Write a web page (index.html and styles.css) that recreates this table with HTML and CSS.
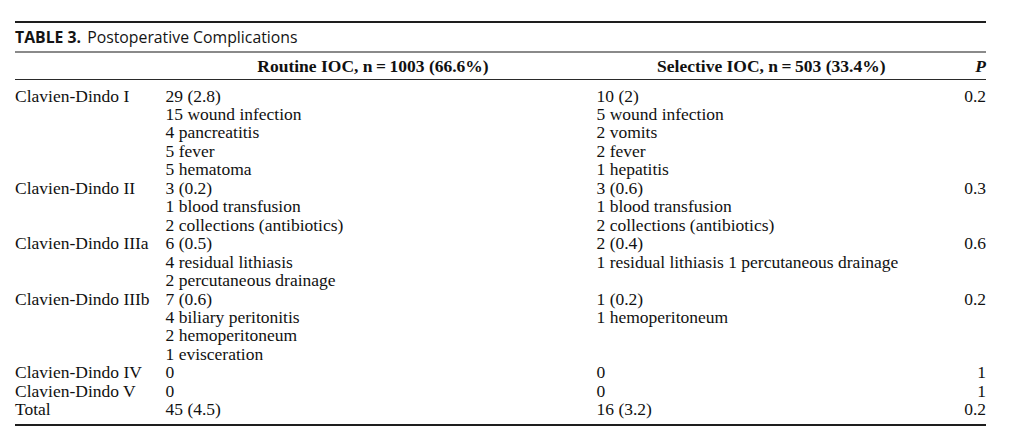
FILE: index.html
```html
<!DOCTYPE html>
<html lang="en">
<head>
<meta charset="utf-8">
<title>Table 3. Postoperative Complications</title>
<link rel="stylesheet" href="styles.css">
</head>
<body>
<div class="wrap">
  <div class="caption"><span class="label">TABLE 3.</span> Postoperative Complications</div>
  <table class="tbl">
    <colgroup>
      <col class="c1"><col class="c2"><col class="c3"><col class="c4">
    </colgroup>
    <thead>
      <tr>
        <th></th>
        <th class="h-routine">Routine IOC, n&thinsp;=&thinsp;1003 (66.6%)</th>
        <th class="h-select">Selective IOC, n&thinsp;=&thinsp;503 (33.4%)</th>
        <th class="h-p"><i>P</i></th>
      </tr>
    </thead>
    <tbody>
      <tr class="first">
        <td>Clavien-Dindo I</td>
        <td><div>29 (2.8)</div><div>15 wound infection</div><div>4 pancreatitis</div><div>5 fever</div><div>5 hematoma</div></td>
        <td><div>10 (2)</div><div>5 wound infection</div><div>2 vomits</div><div>2 fever</div><div>1 hepatitis</div></td>
        <td class="p">0.2</td>
      </tr>
      <tr>
        <td>Clavien-Dindo II</td>
        <td><div>3 (0.2)</div><div>1 blood transfusion</div><div>2 collections (antibiotics)</div></td>
        <td><div>3 (0.6)</div><div>1 blood transfusion</div><div>2 collections (antibiotics)</div></td>
        <td class="p">0.3</td>
      </tr>
      <tr>
        <td>Clavien-Dindo IIIa</td>
        <td><div>6 (0.5)</div><div>4 residual lithiasis</div><div>2 percutaneous drainage</div></td>
        <td><div>2 (0.4)</div><div>1 residual lithiasis 1 percutaneous drainage</div></td>
        <td class="p">0.6</td>
      </tr>
      <tr>
        <td>Clavien-Dindo IIIb</td>
        <td><div>7 (0.6)</div><div>4 biliary peritonitis</div><div>2 hemoperitoneum</div><div>1 evisceration</div></td>
        <td><div>1 (0.2)</div><div>1 hemoperitoneum</div></td>
        <td class="p">0.2</td>
      </tr>
      <tr>
        <td>Clavien-Dindo IV</td>
        <td>0</td>
        <td>0</td>
        <td class="p">1</td>
      </tr>
      <tr>
        <td>Clavien-Dindo V</td>
        <td>0</td>
        <td>0</td>
        <td class="p">1</td>
      </tr>
      <tr class="last">
        <td>Total</td>
        <td>45 (4.5)</td>
        <td>16 (3.2)</td>
        <td class="p">0.2</td>
      </tr>
    </tbody>
  </table>
</div>
</body>
</html>
```

FILE: styles.css
```css
html, body {
  margin: 0;
  padding: 0;
  background: #ffffff;
}

.wrap {
  margin: 21px 0 0 15px;
  width: 971px;
  border-top: 2px solid #1e1e1e;
  border-bottom: 2.5px solid #1e1e1e;
  color: #111111;
}

.caption {
  font-family: "Open Sans", "Lato", sans-serif;
  font-size: 15.8px;
  line-height: 28px;
  height: 28px;
  border-bottom: 2px solid #8a8a8a;
  color: #141414;
}

.caption .label {
  font-weight: bold;
  margin-right: 2px;
}

.tbl {
  width: 971px;
  border-collapse: collapse;
  table-layout: fixed;
  font-family: "Liberation Serif", "Times New Roman", serif;
  font-size: 17.5px;
  line-height: 18.45px;
}

.c1 { width: 150.5px; }
.c2 { width: 431px; }
.c3 { width: 349.5px; }
.c4 { width: 40px; }

.tbl th {
  font-weight: bold;
  padding: 4.2px 0 3.3px 0;
  border-bottom: 1px solid #2a2a2a;
  vertical-align: top;
}

.tbl .h-routine {
  text-align: center;
  padding-right: 16px;
}

.tbl .h-select {
  text-align: center;
}

.tbl .h-p {
  text-align: right;
}

.tbl td {
  padding: 0;
  vertical-align: top;
  text-align: left;
  white-space: nowrap;
}

.tbl tr.first td {
  padding-top: 6.6px;
}

.tbl tr.last td {
  padding-bottom: 5px;
}

.tbl td.p {
  text-align: right;
}
```
